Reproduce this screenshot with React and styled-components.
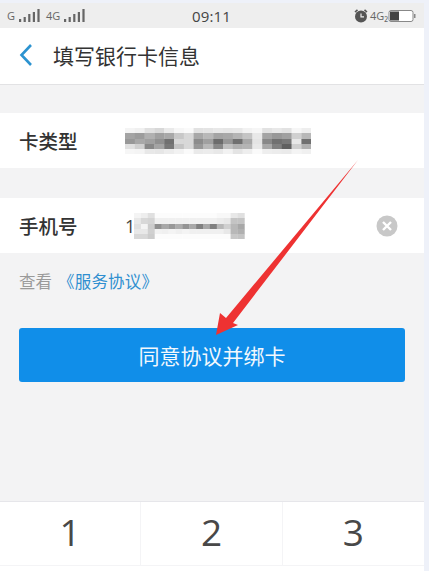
import styled, { createGlobalStyle } from "styled-components";

const GlobalStyle = createGlobalStyle`
  html, body {
    margin: 0;
    padding: 0;
    background: #eef1f9;
  }
  * {
    box-sizing: border-box;
  }
`;

const CJK = `"Noto Sans CJK SC", "Liberation Sans", sans-serif`;

const Page = styled.div`
  position: relative;
  width: 429px;
  height: 571px;
  padding: 3px 5px 0 0;
  overflow: hidden;
  background: #eef1f9;
`;

const Screen = styled.div`
  display: flex;
  flex-direction: column;
  height: 568px;
  background: #f3f3f4;
  font-family: ${CJK};
`;

const StatusBar = styled.div`
  display: grid;
  grid-template-columns: 1fr auto 1fr;
  align-items: center;
  height: 25px;
  padding: 0 8px 0 7px;
  background: #eeeeee;
  color: #555;
`;

const StatusGroup = styled.div`
  display: flex;
  align-items: center;
  gap: ${(p) => p.$gap || 2}px;
  justify-content: ${(p) => (p.$end ? "flex-end" : "flex-start")};
`;

const NetLabel = styled.span`
  margin: 0 ${(p) => p.$right || 0}px 0 ${(p) => p.$left || 0}px;
  font-family: "Open Sans", sans-serif;
  font-size: 11px;
  line-height: 1;
  color: #666;
`;

const Time = styled.span`
  font-family: "Open Sans", sans-serif;
  font-size: 15px;
  color: #444;
  letter-spacing: 0.2px;
`;

const NavBar = styled.div`
  display: flex;
  align-items: center;
  gap: 20px;
  height: 57px;
  padding: 0 0 2px 19px;
  background: #fff;
  border-bottom: 1px solid #e2e2e4;
`;

const Title = styled.h1`
  margin: 0;
  font-size: 21px;
  font-weight: 400;
  color: #333;
`;

const Form = styled.div`
  display: flex;
  flex-direction: column;
  gap: 30px;
  margin-top: 28px;
`;

const Row = styled.div`
  display: flex;
  align-items: center;
  height: 55px;
  padding: 0 26px 0 19px;
  background: #fff;
`;

const Label = styled.span`
  flex: 0 0 106px;
  font-size: 19.5px;
  font-weight: 500;
  color: #333;
`;

const Digit = styled.span`
  font-family: "Open Sans", sans-serif;
  font-size: 18px;
  color: #444;
  margin-right: -1px;
`;

const Mosaic = styled.svg`
  display: block;
  flex: none;
`;

const ClearIcon = styled.svg`
  margin-left: auto;
`;

const Terms = styled.div`
  display: flex;
  align-items: center;
  gap: 8px;
  height: 56px;
  padding-left: 19px;
  font-size: 16.5px;
  color: #9a9a9a;
`;

const TermsLink = styled.span`
  font-size: 16.5px;
  color: #2f8fd0;
  letter-spacing: 0.2px;
  margin-left: -2px;
`;

const SubmitButton = styled.button`
  display: block;
  width: 386px;
  height: 54px;
  margin: 19px 0 0 19px;
  padding: 0;
  border: 0;
  border-radius: 3px;
  background: #108ee9;
  color: #f2f8fd;
  font-family: ${CJK};
  font-size: 21px;
`;

const Keypad = styled.div`
  display: grid;
  grid-template-columns: repeat(3, 1fr);
  margin-top: auto;
  height: 70px;
  grid-auto-rows: 64px;
  background: #fff;
  border-top: 1px solid #e6e6ea;
`;

const Key = styled.div`
  display: flex;
  align-items: center;
  justify-content: center;
  padding-bottom: 4px;
  font-family: "Open Sans", sans-serif;
  font-size: 37px;
  color: #484848;
  border-right: ${(p) => (p.$last ? "0" : "1px solid #f4f4f6")};
  border-bottom: 1px solid #f4f4f6;
`;

const ArrowLayer = styled.svg`
  position: absolute;
  inset: 0;
  pointer-events: none;
`;

const Signal = ({ heights }) => (
  <svg width="24" height="14" viewBox="0 0 24 14">
    {heights.map((h, i) => (
      <rect key={i} x={1 + i * 4.6} y={13 - h} width="2.2" height={h} fill="#666" />
    ))}
  </svg>
);

// grey levels of the blurred-out text, one string per mosaic row
const cardRows = [
  "f4 f0 e0 d8 ea f6 fa e2 e4 e8 e6 e8 f2 f6 e2 e8 e2 f6 ee",
  "a4 9c b0 a0 a8 c8 d8 a8 b8 a4 a8 b4 c4 e8 a4 98 a0 d0 b8",
  "98 a8 a0 90 70 d8 d8 8c a0 6c 98 70 a8 e4 88 70 78 e8 70",
  "e0 d0 88 a4 78 c4 d8 98 b8 88 c0 b0 b4 e8 a8 80 60 d0 b0",
  "f6 f4 e8 e6 ec f2 fa ea ec e8 f2 e4 ee fa ee ec ea f4 f0",
];

const phoneRows = [
  "f4 ee e0 fc fc fc fc fc fc fc fc fc f8 f8 e8 e0",
  "e8 d8 d4 f0 f0 f0 f0 f0 f0 f0 f0 f0 ec e8 c4 c4",
  "e0 f4 cc 90 a8 98 ac 94 a8 80 a8 80 b8 d0 b8 a8",
  "e8 e8 d0 f2 f0 f4 f0 f4 f0 f0 f0 f0 f0 e8 b8 b0",
  "d8 d8 cc fc fc fc fc fc fc fc fc fc fc fc c8 c4",
];

const cellHeights = [5, 6, 5, 5, 5];

const BlurredText = ({ rows, cell, width }) => {
  let y = 0;
  return (
    <Mosaic width={width} height="26" viewBox={`0 0 ${width} 26`}>
      {rows.map((row, r) => {
        const top = y;
        y += cellHeights[r];
        return row.split(" ").map((v, c) => (
          <rect
            key={`${r}-${c}`}
            x={c * cell}
            y={top}
            width={cell + 0.3}
            height={cellHeights[r] + 0.3}
            fill={`#${v}${v}${v}`}
          />
        ));
      })}
    </Mosaic>
  );
};

const App = () => {
  return (
    <Page>
      <GlobalStyle />
      <Screen>
        <StatusBar>
          <StatusGroup $gap={3}>
            <NetLabel>G</NetLabel>
            <Signal heights={[3, 5, 8, 10, 13]} />
            <NetLabel $left={1}>4G</NetLabel>
            <Signal heights={[3, 5, 8, 10, 13]} />
          </StatusGroup>
          <Time>09:11</Time>
          <StatusGroup $end>
            <svg width="14" height="14" viewBox="0 0 14 14">
              <circle cx="7" cy="7.5" r="6" fill="#555" />
              <path d="M1 3 L3.5 .8 M13 3 L10.5 .8" stroke="#555" strokeWidth="1.6" />
              <path d="M7 4.5 V7.8 H10" stroke="#eee" strokeWidth="1.2" fill="none" />
            </svg>
            <NetLabel $right={-2}>4G₂</NetLabel>
            <svg width="28" height="14" viewBox="0 0 28 14">
              <rect x="1" y="1.5" width="24" height="11" rx="2" fill="#fff" stroke="#888" />
              <rect x="2" y="2.5" width="9" height="9" fill="#444" />
              <rect x="26" y="5" width="1.5" height="4" fill="#888" />
            </svg>
          </StatusGroup>
        </StatusBar>

        <NavBar>
          <svg width="14" height="24" viewBox="0 0 14 24">
            <path d="M12 2 L2.5 12 L12 22" fill="none" stroke="#2c93d0" strokeWidth="2.6" />
          </svg>
          <Title>填写银行卡信息</Title>
        </NavBar>

        <Form>
          <Row>
            <Label>卡类型</Label>
            <BlurredText rows={cardRows} cell={9.8} width={186} />
          </Row>
          <Row>
            <Label>手机号</Label>
            <Digit>1</Digit>
            <BlurredText rows={phoneRows} cell={6.9} width={111} />
            <ClearIcon width="22" height="22" viewBox="0 0 22 22">
              <circle cx="11" cy="11" r="10.5" fill="#c8c8c8" />
              <path d="M7 7 L15 15 M15 7 L7 15" stroke="#fff" strokeWidth="2.4" />
            </ClearIcon>
          </Row>
        </Form>

        <Terms>
          查看
          <TermsLink>《服务协议》</TermsLink>
        </Terms>

        <SubmitButton>同意协议并绑卡</SubmitButton>

        <Keypad>
          <Key>1</Key>
          <Key>2</Key>
          <Key $last>3</Key>
        </Keypad>
      </Screen>

      <ArrowLayer width="429" height="571" viewBox="0 0 429 571">
        <path
          d="M358 160 L233 323 L238 325 L216 335 L220 313 L226 318 Z"
          fill="#ee3232"
        />
      </ArrowLayer>
    </Page>
  );
};

export default App;
